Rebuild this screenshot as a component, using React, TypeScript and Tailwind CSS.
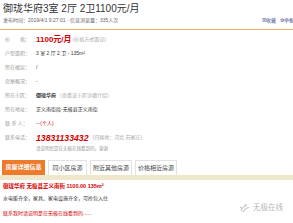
const labelCls = 'w-[31px] shrink-0 text-[#9a9a9a]';

const InfoRow = ({ label, children }: { label: string; children?: React.ReactNode }) => (
  <div className="flex h-[14px] items-center whitespace-nowrap">
    <span className={labelCls}>{label}</span>
    {children}
  </div>
);

const tabs = ['同小区房源', '附近其他房源', '价格相近房源'];
const tabWidths = ['w-[39px]', 'w-[42px]', 'w-[42px]'];

export default function App() {
  return (
    <div
      className="relative h-[223px] w-[293px] overflow-hidden bg-white text-[#333]"
      style={{ fontFamily: '"Liberation Sans", "Noto Sans CJK SC", sans-serif' }}
    >
      {/* title */}
      <div className="pl-[3px] pt-[2px] text-[10px] leading-[14px] whitespace-nowrap text-[#333]">
        御珑华府3室 2厅 2卫1100元/月
      </div>

      {/* meta line */}
      <div className="flex h-[14px] overflow-hidden border-b border-[#e8b46c] pl-[3px] text-[5px] leading-[8px] whitespace-nowrap">
        <span className="w-[259px] shrink-0 text-[#666]">
          发布时间：2019/4/1 9:27:01 · 信息浏览量：335人次
        </span>
        <span className="flex shrink-0 gap-[4px] text-[#3b4a8a]">
          <span>☒收藏</span>
          <span>⚙举报</span>
        </span>
      </div>

      {/* detail rows */}
      <div className="flex flex-col pl-[5px] pt-[3px] text-[5px]">
        <InfoRow label="价　　格：">
          <span className="text-[8px] font-bold leading-none text-[#d40000]">1100元/月</span>
          <span className="ml-[1px] text-[#aaa]">(价格方式面议)</span>
        </InfoRow>
        <InfoRow label="户型面积：">
          <span>3 室 2 厅 2 卫 - 135m²</span>
        </InfoRow>
        <InfoRow label="所在楼层：">
          <span>/</span>
        </InfoRow>
        <InfoRow label="房屋概况：">
          <span>-</span>
        </InfoRow>
        <InfoRow label="所在小区：">
          <span className="font-bold">御珑华府</span>
          <span className="ml-[1px] text-[#aaa]">（查看该小区详细介绍）</span>
        </InfoRow>
        <InfoRow label="所在地址：">
          <span>正义南街段-无极县正义南街</span>
        </InfoRow>
        <InfoRow label="联 系 人：">
          <span>--</span>
          <span className="ml-[1px] text-[#d40000]">(个人)</span>
        </InfoRow>
        <InfoRow label="联系电话：">
          <span className="text-[8.7px] font-bold italic leading-none text-[#d40000]">13831133432</span>
          <span className="ml-[4px] text-[#aaa]">(归属地：河北 石家庄)</span>
        </InfoRow>
        <div className="pl-[31px] text-[4.5px] leading-[8px] text-[#999]">
          请说明您是在无极在线看到的，谢谢
        </div>
      </div>

      {/* tabs */}
      <div className="mt-[7px] flex h-[15px] gap-[3px] pl-[2px] text-[6px] whitespace-nowrap">
        <div className="flex w-[43px] items-center justify-center bg-[#ee7a2c] font-bold text-white">
          房屋详细信息
        </div>
        {tabs.map((t, i) => (
          <div
            key={t}
            className={`flex ${tabWidths[i]} items-center justify-center border border-b-0 border-[#e2e2e2] bg-white text-[#444]`}
          >
            {t}
          </div>
        ))}
      </div>
      <div className="h-[5px] w-full bg-[#efe7cb]" />

      {/* description */}
      <div className="pl-[3px] text-[5px] whitespace-nowrap">
        <div className="text-[5.5px] font-bold leading-[12px] text-[#d40000]">
          御珑华府 无极县正义南街 1100.00 135m²
        </div>
        <div className="leading-[12px] text-[#333]">水电暖齐全，家具、家电设施齐全，可拎包入住</div>
        <div className="mt-[3px] leading-[12px] text-[#d40000]">联系我时请说明是在无极在线看到的......</div>
      </div>

      {/* watermark */}
      <div className="absolute left-[239px] top-[203px] flex items-center gap-[2px] text-[7.5px] leading-none text-[#b8b8b8]">
        <svg width="12" height="10" viewBox="0 0 12 10" fill="none" stroke="#c4c4c4" strokeWidth="1.1">
          <path d="M2 8 C3 5 5 3 8 2" />
          <path d="M4 9 C5 7 7 5 10 4.5" />
          <path d="M1 4 L3 5" />
          <path d="M6 1 L6.5 3" />
        </svg>
        <span>无极在线</span>
      </div>
    </div>
  );
}
